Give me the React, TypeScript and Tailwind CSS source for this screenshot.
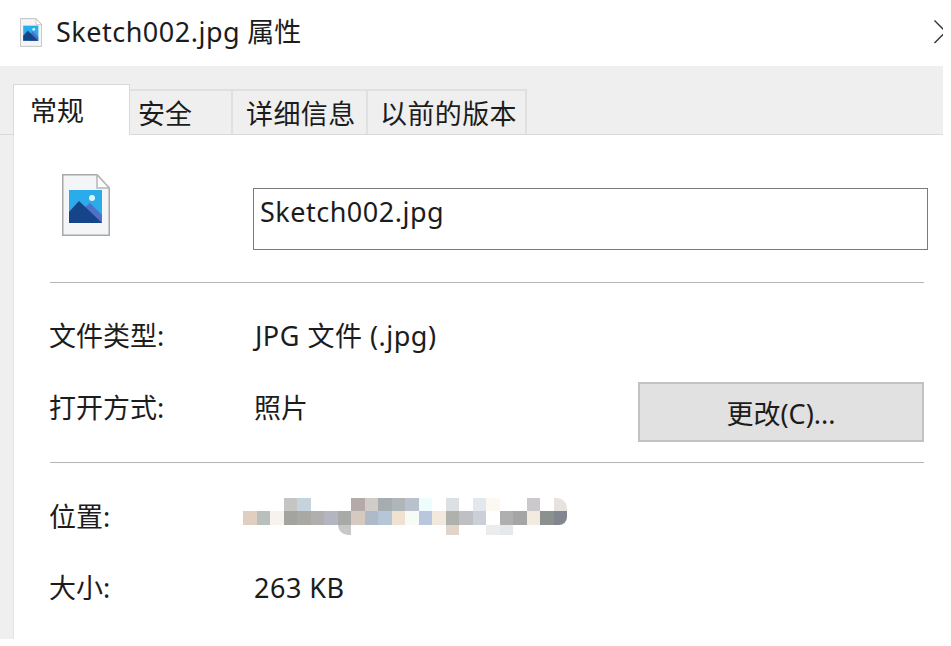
import React from 'react';

const FONT = "font-['Noto_Sans','Noto_Sans_CJK_SC',sans-serif]";

// Blurred path: each row is a list of 24 cells, '' leaves a gap
const PATH_CELLS = [
  ['', '', '', 'bg-[#c5c6c4]', 'bg-[#c6d2dc]', '', '', '', 'bg-[#b5aaaa]', 'bg-[#d0cdc9]', 'bg-[#a6adb1]', 'bg-[#b0b5b8]', 'bg-[#b9c2cc]', 'bg-[#effcfe]', '', 'bg-[#dcdfe4]', '', 'bg-[#e2e8ee]', 'bg-[#fcf8f2]', '', '', 'bg-[#cbc9cb]', '', 'bg-[#e6e3df] rounded-tr-[10px]'],
  ['bg-[#e0cfc0]', 'bg-[#b9bfbc]', 'bg-[#f6f2ee]', 'bg-[#a3a3a0]', 'bg-[#a9a8a2]', 'bg-[#b0afad]', 'bg-[#b3b5c0]', 'bg-[#a7aaa6]', 'bg-[#d5c9c0]', 'bg-[#afb9c7]', 'bg-[#b5c6d7]', 'bg-[#f0e2d0]', 'bg-[#f6fbf5]', 'bg-[#b8c6de]', 'bg-[#f2e8de]', 'bg-[#aeb1ac]', 'bg-[#bfc0c3]', 'bg-[#cbd0d8]', '', 'bg-[#afafaf]', 'bg-[#a5a5a5]', 'bg-[#f3ebe1]', 'bg-[#8b918e]', 'bg-[#82868f] rounded-br-[8px]'],
  ['', '', '', '', '', '', '', 'bg-[#c9c7c8] rounded-bl-[12px]', '', '', '', '', '', '', '', 'bg-[#e2d4c8]', '', '', 'bg-[#ebecec]', 'bg-[#e3e9ed]', '', '', '', ''],
];

function FileIcon({ className }: { className: string }) {
  return (
    <svg viewBox="0 0 48 62" className={className}>
      <path d="M0.75 0.75H35L47.25 14V61.25H0.75Z" fill="#f4f5f7" stroke="#a8a8a8" strokeWidth="1.5" />
      <path d="M35 0.75V14H47.25Z" fill="#fff" stroke="#b5b5b5" strokeWidth="1.5" strokeLinejoin="round" />
      <rect x="7" y="16" width="33" height="33" fill="#29ace9" />
      <circle cx="30" cy="24" r="3" fill="#dff3fc" />
      <path d="M22 34L28 29L40 41V49H22Z" fill="#4f6fc9" />
      <path d="M7 38L17 27L40 49H7Z" fill="#164488" />
    </svg>
  );
}

function InfoRow({ label, className, children }: { label: string; className: string; children: React.ReactNode }) {
  return (
    <div className={`flex items-center ${className}`}>
      <span className="w-[205px] -ml-px shrink-0">{label}</span>
      {children}
    </div>
  );
}

export default function App() {
  return (
    <div className={`w-[951px] h-[646px] bg-white text-[#1c1c1c] text-[27px] leading-[36px] ${FONT}`}>
      <div className="w-[943px] h-[639px] overflow-hidden flex flex-col">
        {/* Title bar */}
        <div className="h-[66px] shrink-0 flex items-center pl-[20px] relative">
          <FileIcon className="w-[22px] h-[29px] mr-[14px] -mt-[2px]" />
          <span className="-mt-[2px]"><span className="tracking-[0.5px]">Sketch002.jpg</span> 属性</span>
          <svg viewBox="0 0 12 24" className="absolute left-[934px] top-[20px] w-[12px] h-[24px]">
            <path d="M0.5 0.5L23 23M0.5 23L23 0.5" stroke="#333" strokeWidth="1.4" fill="none" />
          </svg>
        </div>

        {/* Tabs */}
        <div className="h-[69px] shrink-0 bg-[#efefef] pl-[13px] flex items-end border-b border-[#dadada] relative">
          <div className="w-[117px] h-[51px] bg-white border border-b-0 border-[#d9d9d9] -mb-px pl-[16px] pt-[8px] relative z-10">常规</div>
          <div className="w-[103px] h-[45px] border-t-2 border-r-2 border-[#e0e0e0] pl-[8px] pt-[5px]">安全</div>
          <div className="w-[135px] h-[45px] border-t-2 border-r-2 border-[#e0e0e0] pl-[13px] pt-[5px] tracking-[0.4px]">详细信息</div>
          <div className="w-[159px] h-[45px] border-t-2 border-r-2 border-[#e0e0e0] pl-[12px] pt-[5px] tracking-[0.4px]">以前的版本</div>
        </div>

        {/* General page */}
        <div className="flex-1 bg-[#efefef] pl-[13px]">
          <div className="h-full bg-white border-l border-[#e3e3e3] pl-[36px] pr-[19px] flex flex-col">
            <div className="flex pt-[39px] h-[148px] border-b border-[#b4b4b4] shrink-0">
              <FileIcon className="w-[48px] h-[62px] ml-[12px] shrink-0" />
              <div className="ml-[143px] mt-[14px] w-[675px] -mr-[5px] h-[62px] shrink-0 border border-[#7a7a7a] pl-[6px] pt-[5px] tracking-[0.5px]">Sketch002.jpg</div>
            </div>
            <InfoRow label="文件类型:" className="mt-[35px]">
              <span className="tracking-[0.5px] ml-px">JPG 文件 (.jpg)</span>
            </InfoRow>
            <div className="flex items-start mt-[28px] h-[81px] border-b border-[#b4b4b4] shrink-0">
              <span className="w-[205px] -ml-px shrink-0 mt-[8px]">打开方式:</span>
              <span className="mt-[8px]">照片</span>
              <button className={`ml-auto w-[286px] h-[60px] bg-[#e1e1e1] border-2 border-[#c2c2c2] pt-[3px] ${FONT}`}>更改(C)...</button>
            </div>
            <InfoRow label="位置:" className="mt-[35px]">
              <div className="-ml-[11px] grid grid-cols-[repeat(24,13.5px)] grid-rows-[13px_14px_10px] blur-[0.5px]">
                {PATH_CELLS.flat().map((cell, i) => (
                  <div key={i} className={cell} />
                ))}
              </div>
            </InfoRow>
            <InfoRow label="大小:" className="mt-[35px]">
              <span className="tracking-[0.5px]">263 KB</span>
            </InfoRow>
          </div>
        </div>
      </div>
    </div>
  );
}
